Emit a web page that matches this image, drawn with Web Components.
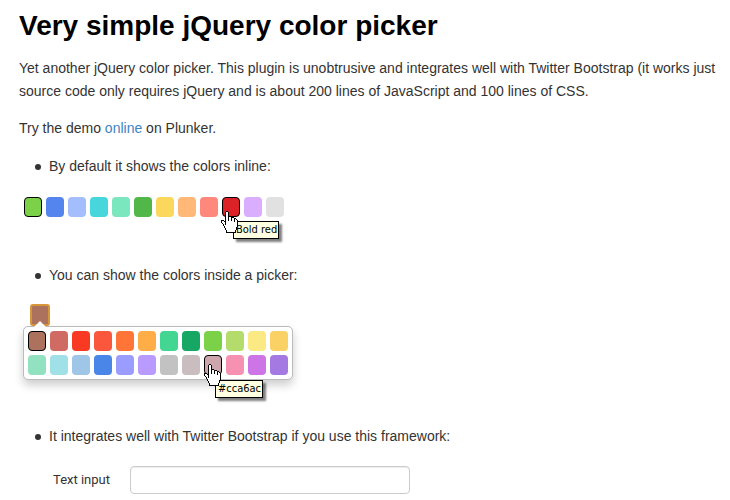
<!DOCTYPE html>
<html lang="en">
<head>
<meta charset="utf-8">
<title>Very simple jQuery color picker</title>
<style>
  body { margin: 0; background: #fff; color: #333; font: 14px/23px "Liberation Sans", Arial, sans-serif; }
</style>
</head>
<body>
<readme-page></readme-page>
<script>
const HAND = [
  "     XX          ",
  "    X..X         ",
  "    X..X         ",
  "    X..X         ",
  "    X..X         ",
  "    X..XXX       ",
  "    X..X..XXX    ",
  "    X..X..X..XX  ",
  "    X..X..X..X.X ",
  "XXX X..X..X..X..X",
  "X..XX........X..X",
  "X...X...........X",
  " X..X...........X",
  "  X.X...........X",
  "  X.............X",
  "   X............X",
  "   X...........X ",
  "    X..........X ",
  "    X..........X ",
  "     X........X  ",
  "     X........X  ",
  "     XXXXXXXXXX  "
];

class HandCursor extends HTMLElement {
  constructor() {
    super();
    const cells = mark => HAND.map((row, y) =>
      [...row].map((c, x) => c === mark ? `M${x} ${y}h1v1h-1z` : "").join("")).join("");
    this.attachShadow({ mode: "open" }).innerHTML = `
      <style>:host { display: block; } svg { display: block; }</style>
      <svg width="17" height="22" viewBox="0 0 17 22" shape-rendering="crispEdges" aria-hidden="true">
        <path fill="#fff" d="${cells(".")}"/><path fill="#000" d="${cells("X")}"/>
      </svg>`;
  }
}
customElements.define("hand-cursor", HandCursor);

class ColorTip extends HTMLElement {
  constructor() {
    super();
    this.attachShadow({ mode: "open" }).innerHTML = `
      <style>
        :host { display: block; box-sizing: border-box; height: 18px; padding: 0 1px 0 2px; border: 1px solid #000;
          background: #ffffe1; color: #000; box-shadow: 3px 3px 2px rgba(0,0,0,.5);
          font: 11px/16px "DejaVu Sans Condensed", "DejaVu Sans", Tahoma, sans-serif; white-space: nowrap; }
      </style><slot></slot>`;
  }
}
customElements.define("color-tip", ColorTip);

class ColorSwatch extends HTMLElement {
  connectedCallback() {
    const color = this.getAttribute("color");
    const name = this.getAttribute("name") || color;
    this.attachShadow({ mode: "open" }).innerHTML = `
      <style>
        :host { display: block; position: relative; width: 18px; height: 20px; }
        button { display: block; box-sizing: border-box; width: 100%; height: 100%; margin: 0; padding: 0;
          border: 1px solid transparent; border-radius: 4px; background: ${color} border-box; }
        :host([selected]) button, :host([hovered]) button { border-color: #000; }
        color-tip { position: absolute; z-index: 2; left: 11px; top: 24px; }
        hand-cursor { position: absolute; z-index: 3; left: -1px; top: 14px; }
        :host([hovered="high"]) color-tip { top: 25px; }
        :host([hovered="high"]) hand-cursor { left: 0; top: 9px; }
      </style>
      <button type="button" aria-label="${name}"></button>
      ${this.hasAttribute("hovered") ? `<color-tip>${name}</color-tip><hand-cursor></hand-cursor>` : ""}`;
  }
}
customElements.define("color-swatch", ColorSwatch);

class ColorPalette extends HTMLElement {
  constructor() {
    super();
    this.attachShadow({ mode: "open" }).innerHTML = `
      <style>
        :host { display: grid; grid-template-columns: repeat(12, 18px); gap: 4px; width: max-content; }
        :host([popup]) { position: relative; padding: 4px; border: 1px solid #bbb; border-radius: 5px;
          background: #fff; box-shadow: 0 5px 10px rgba(0,0,0,.2); }
        :host([popup])::before { content: ""; position: absolute; left: 10px; top: -6px;
          border: solid transparent; border-width: 0 6px 6px; border-bottom-color: #fff; }
      </style><slot></slot>`;
  }
}
customElements.define("color-palette", ColorPalette);

class PickerButton extends HTMLElement {
  constructor() {
    super();
    this.attachShadow({ mode: "open" }).innerHTML = `
      <style>
        :host { display: block; }
        button { display: block; box-sizing: border-box; width: 20px; height: 22px; margin: 0 0 0 7px; padding: 0;
          border: 2px solid #d8963a; border-radius: 3px; background: #ac725e; }
      </style>
      <button type="button" aria-label="Choose a color"></button>
      <slot></slot>`;
  }
}
customElements.define("picker-button", PickerButton);

class TextField extends HTMLElement {
  constructor() {
    super();
    this.attachShadow({ mode: "open" }).innerHTML = `
      <style>
        :host { display: flex; align-items: center; gap: 20px; }
        label { font: 13px/20px Roboto, sans-serif; }
        input { box-sizing: border-box; width: 280px; height: 28px; padding: 4px 6px; border: 1px solid #ccc;
          border-radius: 4px; background: #fff; box-shadow: inset 0 1px 1px rgba(0,0,0,.075); font: inherit; }
      </style>
      <label for="field"><slot></slot></label><input id="field" type="text">`;
  }
}
customElements.define("text-field", TextField);

const swatches = (list, selected, hovered, level = "low") => list.map(item => {
  const [color, name] = item.split("|");
  return `<color-swatch color="${color}" ${name ? `name="${name}"` : ""}
    ${color === selected ? "selected" : ""} ${color === hovered ? `hovered="${level}"` : ""}></color-swatch>`;
}).join("");

const INLINE = ["#7bd148|Green", "#5484ed|Bold blue", "#a4bdfc|Blue", "#46d6db|Turquoise", "#7ae7bf|Light green",
  "#51b749|Bold green", "#fbd75b|Yellow", "#ffb878|Orange", "#ff887c|Red", "#dc2127|Bold red", "#dbadff|Purple", "#e1e1e1|Gray"];
const POPUP = ["#ac725e", "#d06b64", "#f83a22", "#fa573c", "#ff7537", "#ffad46", "#42d692", "#16a765", "#7bd148",
  "#b3dc6c", "#fbe983", "#fad165", "#92e1c0", "#9fe1e7", "#9fc6e7", "#4986e7", "#9a9cff", "#b99aff", "#c2c2c2",
  "#cabdbf", "#cca6ac", "#f691b2", "#cd74e6", "#a47ae2"];

class ReadmePage extends HTMLElement {
  constructor() {
    super();
    this.attachShadow({ mode: "open" }).innerHTML = `
      <style>
        :host { display: block; padding: 6px 0 6px 19px; }
        h1 { margin: 0 0 12px; color: #000; font-size: 28px; line-height: 39px; }
        p { margin: 0 0 14px; }
        a { color: #4183c4; text-decoration: none; }
        ul { margin: 15px 0 0; padding-left: 16px; list-style: none; }
        li { display: flex; align-items: center; gap: 8px; }
        li::before { content: ""; width: 6px; height: 6px; border-radius: 50%; background: #333; }
        .inline { margin: 19px 0 47px 5px; }
        picker-button { margin: 17px 0 45px 4px; }
        text-field { margin: 18px 0 0 34px; }
      </style>
      <h1>Very simple jQuery color picker</h1>
      <p>Yet another jQuery color picker. This plugin is unobtrusive and integrates well with Twitter Bootstrap (it works just<br>
      source code only requires jQuery and is about 200 lines of JavaScript and 100 lines of CSS.</p>
      <p>Try the demo <a href="#demo">online</a> on Plunker.</p>
      <ul><li>By default it shows the colors inline:</li></ul>
      <color-palette class="inline">${swatches(INLINE, "#7bd148", "#dc2127")}</color-palette>
      <ul><li>You can show the colors inside a picker:</li></ul>
      <picker-button><color-palette popup>${swatches(POPUP, "#ac725e", "#cca6ac", "high")}</color-palette></picker-button>
      <ul><li>It integrates well with Twitter Bootstrap if you use this framework:</li></ul>
      <text-field>Text input</text-field>`;
  }
}
customElements.define("readme-page", ReadmePage);
</script>
</body>
</html>
